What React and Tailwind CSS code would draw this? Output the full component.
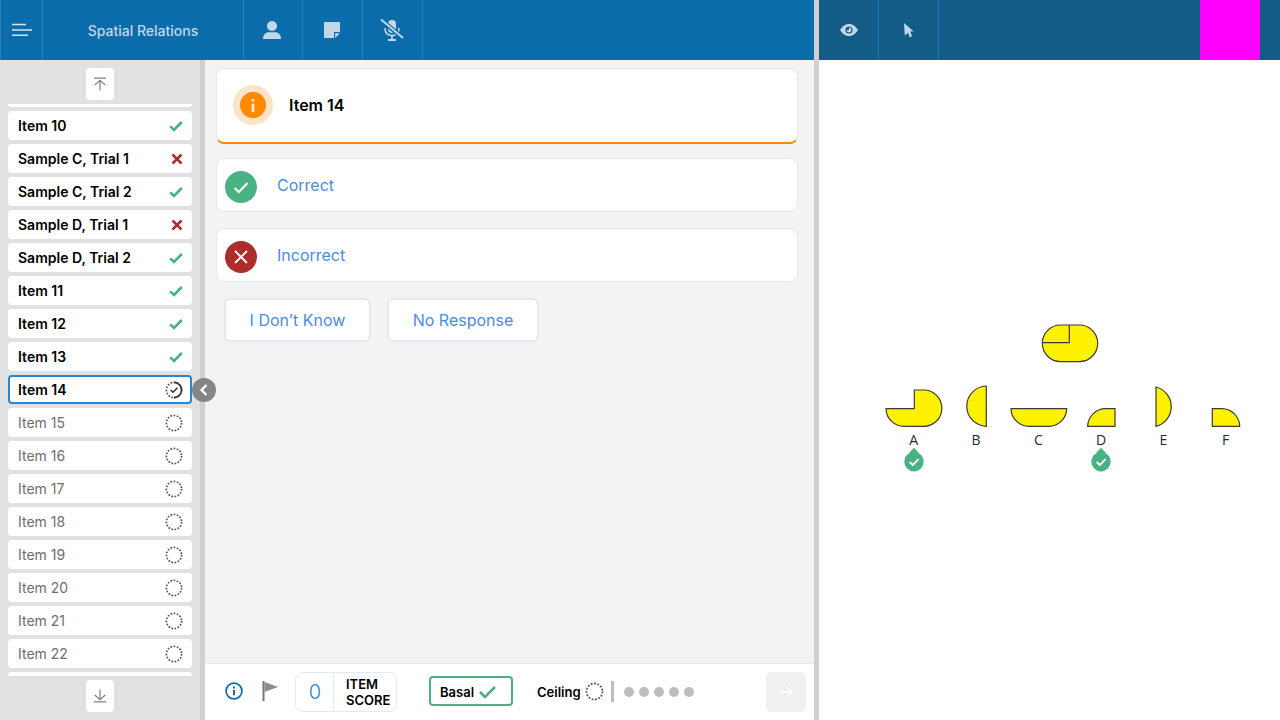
import React from "react";

const done = [
  ["Item 10", "ok"],
  ["Sample C, Trial 1", "bad"],
  ["Sample C, Trial 2", "ok"],
  ["Sample D, Trial 1", "bad"],
  ["Sample D, Trial 2", "ok"],
  ["Item 11", "ok"],
  ["Item 12", "ok"],
  ["Item 13", "ok"],
];
const pending = ["Item 15", "Item 16", "Item 17", "Item 18", "Item 19", "Item 20", "Item 21", "Item 22"];

function Check() {
  return (
    <svg width="14" height="12" viewBox="0 0 14 12" className="shrink-0">
      <path d="M1.2 6.4 L5 10 L12.8 2" fill="none" stroke="#48b283" strokeWidth="2.6" />
    </svg>
  );
}
function Cross() {
  return (
    <svg width="12" height="12" viewBox="0 0 12 12" className="shrink-0">
      <path d="M1.5 1.5 L10.5 10.5 M10.5 1.5 L1.5 10.5" fill="none" stroke="#ad2c2c" strokeWidth="2.5" />
    </svg>
  );
}
function Dashed({ size = 18 }) {
  return (
    <svg width={size} height={size} viewBox="0 0 18 18" className="shrink-0">
      <circle cx="9" cy="9" r="7.6" fill="none" stroke="#555" strokeWidth="1.7" strokeDasharray="1.7 1.5" />
    </svg>
  );
}
function Current() {
  return (
    <svg width="18" height="18" viewBox="0 0 18 18" className="shrink-0">
      <circle cx="9" cy="9" r="7.6" fill="none" stroke="#555" strokeWidth="1.7" strokeDasharray="1.7 1.5" />
      <path d="M9 1.4 A7.6 7.6 0 0 1 9 16.6" fill="none" stroke="#333" strokeWidth="1.6" />
      <path d="M5.6 9 L8 11.3 L12.4 6.8" fill="none" stroke="#333" strokeWidth="1.5" />
    </svg>
  );
}
function Row({ label, children, bold = true, active = false }) {
  return (
    <div
      className={
        "h-[29px] mb-1 shrink-0 rounded flex items-center justify-between bg-white text-sm " +
        (active ? "border-2 border-[#2586d8] pr-[7px] pl-[8px] " : "pr-[9px] pl-[10px] ") +
        (bold ? "font-semibold text-black" : "text-[#6e6e6e]")
      }
    >
      <span>{label}</span>
      {children}
    </div>
  );
}
function HCell({ className = "", children }) {
  return (
    <div className={"h-full flex items-center justify-center border-r border-[#2a81bb] " + className}>{children}</div>
  );
}
function ScrollBtn({ children }) {
  return <div className="w-7 h-8 rounded bg-white flex items-center justify-center">{children}</div>;
}

export default function App() {
  return (
    <div className="w-[1280px] h-[720px] overflow-hidden flex bg-white font-['Inter','Liberation_Sans',sans-serif]">
      {/* left pane */}
      <div className="w-[814px] h-full flex flex-col shrink-0">
        <header className="h-[60px] shrink-0 bg-[#0b6cab] flex border-l border-[#2a81bb]">
          <HCell className="w-[42px]">
            <svg width="20" height="14" viewBox="0 0 20 14">
              <path d="M0 1.5 H14 M0 7 H20 M0 12.3 H16" stroke="#d5e4f0" strokeWidth="1.6" fill="none" />
            </svg>
          </HCell>
          <HCell className="w-[201px] pt-[2px]">
            <span className="text-sm font-medium text-[#c4d7e6]">Spatial Relations</span>
          </HCell>
          <HCell className="w-[59px] pr-[2px]">
            <svg width="20" height="20" viewBox="0 0 20 20">
              <circle cx="10" cy="6" r="5" fill="#c4d7e6" />
              <path d="M1 18.4 C1 14 4.5 12.2 7 12.2 H13 C15.5 12.2 19 14 19 18.4 C19 18.8 18.6 19 18 19 H2 C1.4 19 1 18.8 1 18.4 Z" fill="#c4d7e6" />
            </svg>
          </HCell>
          <HCell className="w-[60px] pr-[2px]">
            <svg width="16" height="16" viewBox="0 0 16 16">
              <path d="M0 0 H16 V10 H10 V16 H0 Z" fill="#c4d7e6" />
              <path d="M11.2 16 V11.2 H16 Z" fill="#c4d7e6" />
            </svg>
          </HCell>
          <HCell className="w-[60px] pr-[2px]">
            <svg width="26" height="24" viewBox="0 0 26 24">
              <rect x="9" y="2" width="8" height="13" rx="4" fill="#c4d7e6" />
              <path d="M6 10 C6 15 9 17.5 13 17.5 C17 17.5 20 15 20 10" fill="none" stroke="#c4d7e6" strokeWidth="1.6" />
              <path d="M13 17.5 V21 M9 22 H17" stroke="#c4d7e6" strokeWidth="1.8" fill="none" />
              <path d="M2 2 L24 20" stroke="#0b6cab" strokeWidth="4.5" />
              <path d="M2 1.5 L24 20" stroke="#c4d7e6" strokeWidth="1.9" />
            </svg>
          </HCell>
        </header>

        <div className="flex-1 min-h-0 flex">
          {/* sidebar */}
          <aside className="relative w-[205px] shrink-0 bg-[#e1e1e1] border-r-[5px] border-[#d0d0d0] flex flex-col items-center">
            <div className="pt-2 pb-1 h-11 shrink-0">
              <ScrollBtn>
                <svg width="14" height="14" viewBox="0 0 14 14">
                  <path d="M1 1.2 H13 M7 13.5 V3.5 M1.8 8 L7 3.4 L12.2 8" fill="none" stroke="#808080" strokeWidth="1.2" />
                </svg>
              </ScrollBtn>
            </div>
            <div className="w-[184px] h-[572px] shrink-0 overflow-hidden flex flex-col">
              <div className="h-[3px] mb-1 shrink-0 bg-white rounded-b" />
              {done.map(([l, s]) => (
                <Row key={l} label={l}>
                  {s === "ok" ? <Check /> : <Cross />}
                </Row>
              ))}
              <Row label="Item 14" active>
                <Current />
              </Row>
              {pending.map((l) => (
                <Row key={l} label={l} bold={false}>
                  <Dashed />
                </Row>
              ))}
              <div className="h-1 shrink-0 bg-white rounded-t" />
            </div>
            <div className="pt-1">
              <ScrollBtn>
                <svg width="14" height="14" viewBox="0 0 14 14">
                  <path d="M1 12.8 H13 M7 0.5 V10.5 M1.8 6 L7 10.6 L12.2 6" fill="none" stroke="#808080" strokeWidth="1.2" />
                </svg>
              </ScrollBtn>
            </div>
            <div className="absolute left-[192px] top-[318px] w-6 h-6 rounded-full bg-[#858585] flex items-center justify-center">
              <svg width="10" height="12" viewBox="0 0 10 12">
                <path d="M7.5 1 L2.5 6 L7.5 11" fill="none" stroke="#fff" strokeWidth="2.2" />
              </svg>
            </div>
          </aside>

          {/* main */}
          <main className="w-[609px] shrink-0 flex flex-col bg-[#f3f3f3]">
            <div className="flex-1 min-h-0 pt-2 pl-[11px] pr-4">
              <div className="h-[76px] rounded-lg bg-white border border-[#e4e8f1] border-b-2 border-b-[#ff8a00] flex items-center pl-4 pb-[1px]">
                <div className="w-10 h-10 rounded-full bg-[#fde4c8] flex items-center justify-center">
                  <div className="w-[26px] h-[26px] rounded-full bg-[#ff8a00] flex items-center justify-center">
                    <svg width="4" height="13" viewBox="0 0 4 13">
                      <path d="M0.6 0 H3.4 V2.6 H0.6 Z M0.6 4.6 H3.4 V13 H0.6 Z" fill="#fde4c8" />
                    </svg>
                  </div>
                </div>
                <span className="ml-4 text-base font-semibold text-black">Item 14</span>
              </div>

              <div className="mt-[14px] h-[54px] rounded-lg bg-white border border-[#e4e8f1] flex items-center pl-2">
                <div className="w-8 h-8 rounded-full bg-[#48b283] flex items-center justify-center mt-1">
                  <svg width="16" height="13" viewBox="0 0 16 13">
                    <path d="M1.5 7 L5.8 11 L14.5 2" fill="none" stroke="#fff" strokeWidth="2" />
                  </svg>
                </div>
                <span className="ml-5 text-base text-[#4a8ddc]">Correct</span>
              </div>

              <div className="mt-4 h-[54px] rounded-lg bg-white border border-[#e4e8f1] flex items-center pl-2">
                <div className="w-8 h-8 rounded-full bg-[#ad2c2c] flex items-center justify-center mt-1">
                  <svg width="14" height="14" viewBox="0 0 14 14">
                    <path d="M1 1 L13 13 M13 1 L1 13" fill="none" stroke="#fff" strokeWidth="1.8" />
                  </svg>
                </div>
                <span className="ml-5 text-base text-[#4a8ddc]">Incorrect</span>
              </div>

              <div className="mt-4 pl-2 flex gap-4">
                <div className="w-[147px] h-11 rounded-md bg-white border-2 border-[#e4e8f1] flex items-center justify-center text-base text-[#4a8ddc]">
                  I Don’t Know
                </div>
                <div className="w-[152px] h-11 rounded-md bg-white border-2 border-[#e4e8f1] flex items-center justify-center text-base text-[#4a8ddc]">
                  No Response
                </div>
              </div>
            </div>

            {/* footer */}
            <footer className="h-[57px] shrink-0 bg-white border-t border-[#e6e6e6] flex items-center pl-5 pr-2">
              <svg width="18" height="18" viewBox="0 0 18 18" className="shrink-0 mb-[2px]">
                <circle cx="9" cy="9" r="7.9" fill="none" stroke="#0b6cab" strokeWidth="1.7" />
                <path d="M8 4.6 H10 V6.6 H8 Z M8 8 H10 V13.2 H8 Z" fill="#0b6cab" />
              </svg>
              <svg width="16" height="20" viewBox="0 0 16 20" className="shrink-0 ml-[19px] mb-[2px]">
                <path d="M0.5 0 H2.5 V20 H0.5 Z" fill="#777" />
                <path d="M2.5 1 L16 6 L2.5 11 Z" fill="#8d8d8d" />
              </svg>
              <div className="ml-[17px] w-[102px] h-10 rounded-lg border border-[#e4e8f1] flex items-center shrink-0">
                <div className="w-[38px] h-full border-r border-[#e4e8f1] flex items-center justify-center pl-[1px] text-xl font-light text-[#2a7fce]">0</div>
                <div className="pl-3 text-[13px] leading-[16px] font-semibold text-black">
                  ITEM
                  <br />
                  SCORE
                </div>
              </div>
              <div className="ml-8 w-[84px] h-[30px] rounded border-2 border-[#48b283] flex items-center pl-[9px] gap-[5px] shrink-0 mb-[2px]">
                <span className="text-[13px] font-semibold text-black pt-[3px]">Basal</span>
                <svg width="17" height="14" viewBox="0 0 17 14" className="mt-[2px]">
                  <path d="M1 7 L6 12 L16 2" fill="none" stroke="#48b283" strokeWidth="2.6" />
                </svg>
              </div>
              <span className="ml-6 text-[13px] font-semibold text-black mt-[1px]">Ceiling</span>
              <div className="ml-1 mb-[1px] shrink-0">
                <Dashed size={19} />
              </div>
              <div className="ml-[7px] w-[3px] h-[21px] bg-[#bdbdbd] shrink-0 mb-[1px]" />
              <div className="ml-[10px] flex gap-[5px] shrink-0 mb-[1px]">
                <div className="w-[10px] h-[10px] rounded-full bg-[#bdbdbd]" />
                <div className="w-[10px] h-[10px] rounded-full bg-[#bdbdbd]" />
                <div className="w-[10px] h-[10px] rounded-full bg-[#bdbdbd]" />
                <div className="w-[10px] h-[10px] rounded-full bg-[#bdbdbd]" />
                <div className="w-[10px] h-[10px] rounded-full bg-[#bdbdbd]" />
              </div>
              <div className="ml-auto w-10 h-10 rounded-md bg-[#f0f0f0] flex items-center justify-center shrink-0">
                <svg width="14" height="14" viewBox="0 0 14 14">
                  <path d="M1 7 H13 M7.5 1.5 L13 7 L7.5 12.5" fill="none" stroke="#fff" strokeWidth="1.5" />
                </svg>
              </div>
            </footer>
          </main>
        </div>
      </div>

      {/* divider */}
      <div className="w-[5px] h-full shrink-0 bg-[#d0d0d0]" />

      {/* right pane */}
      <div className="flex-1 min-w-0 h-full flex flex-col">
        <header className="h-[60px] shrink-0 bg-[#135c88] flex">
          <div className="w-[60px] h-full border-r border-[#1e7ab8] flex items-center justify-center">
            <svg width="18" height="12" viewBox="0 0 18 12">
              <path d="M0 6 C3 1.5 6 0 9 0 C12 0 15 1.5 18 6 C15 10.5 12 12 9 12 C6 12 3 10.5 0 6 Z" fill="#c4d7e6" />
              <circle cx="9" cy="6" r="3.6" fill="#135c88" />
              <path d="M9 3.6 A2.4 2.4 0 1 1 6.6 6 H9 Z" fill="#c4d7e6" />
            </svg>
          </div>
          <div className="w-[60px] h-full border-r border-[#1e7ab8] flex items-center justify-center">
            <svg width="10" height="15" viewBox="0 0 10 15">
              <path d="M0 0 L9.8 8.6 H6.2 L8 13 L5.8 14.4 L4 9.8 L0.8 12.6 Z" fill="#c4d7e6" />
            </svg>
          </div>
          <div className="flex-1" />
          <div className="w-[60px] h-full bg-[#ff00ff] shrink-0" />
          <div className="w-5 shrink-0" />
        </header>
        <div className="flex-1 min-h-0 bg-white">
          <svg viewBox="819 60 461 660" className="block w-full h-full">
            <g fill="#fff200" stroke="#3a3a3a" strokeWidth="1.2">
              <rect x="1042.3" y="325" width="55.4" height="36.6" rx="18.3" />
              <path d="M1069.3 325 V342.7 H1042.3" fill="none" />
              <path d="M914.3 390 H923.7 A18.15 18.15 0 0 1 923.7 426.3 H904 A18 18 0 0 1 886 408.7 H914.3 Z" />
              <path d="M986.3 386 V426.3 A20.16 20.16 0 0 1 986.3 386 Z" />
              <path d="M1011 408.7 H1066.7 A18 18 0 0 1 1048.7 426.3 H1029 A18 18 0 0 1 1011 408.7 Z" />
              <path d="M1115 408.7 V426.3 H1087.7 A18 18 0 0 1 1105.5 408.7 Z" />
              <path d="M1156 387 A20.3 20.3 0 0 1 1156 426.3 Z" />
              <path d="M1212.3 408.7 H1222 A18 18 0 0 1 1239.7 426.3 H1212.3 Z" />
            </g>
            <g fontFamily="'Open Sans',sans-serif" fontSize="14" fill="#1f2a3a" textAnchor="middle">
              <text x="913.7" y="445">A</text>
              <text x="976" y="445">B</text>
              <text x="1038.5" y="445">C</text>
              <text x="1101" y="445">D</text>
              <text x="1163.3" y="445">E</text>
              <text x="1225.5" y="445">F</text>
            </g>
            {[914, 1101].map((x) => (
              <g key={x}>
                <path d={`M${x - 5} 453 L${x} 447.7 L${x + 5} 453 Z`} fill="#48b283" />
                <circle cx={x} cy="461.7" r="9.7" fill="#48b283" />
                <path d={`M${x - 4.4} 462 L${x - 1.2} 465 L${x + 4.6} 459.2`} fill="none" stroke="#fff" strokeWidth="1.9" />
              </g>
            ))}
          </svg>
        </div>
      </div>
    </div>
  );
}
